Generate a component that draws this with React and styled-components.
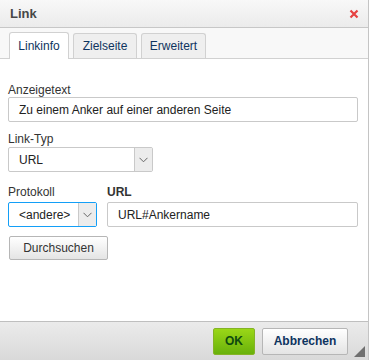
import React from 'react';
import styled, { createGlobalStyle } from 'styled-components';

const Global = createGlobalStyle`
  html, body { margin: 0; padding: 0; background: #fff; }
  body { font-family: "Liberation Sans", Arial, sans-serif; font-size: 12px; color: #333; }
`;

const Dialog = styled.div`
  width: 369px;
  height: 360px;
  display: flex;
  flex-direction: column;
  box-sizing: border-box;
  border-right: 1px solid #c4c4c4;
  background: #fff;
`;

const TitleBar = styled.div`
  height: 28px;
  box-sizing: border-box;
  display: flex;
  align-items: center;
  justify-content: space-between;
  padding: 0 9px 0 10px;
  background: linear-gradient(#f8f8f8, #ebebeb);
  border-bottom: 1px solid #c7c7c7;
  font-size: 13px;
  font-weight: bold;
  color: #474747;
`;

const Close = styled.span`
  display: flex;
`;

const TabBar = styled.div`
  height: 31px;
  box-sizing: border-box;
  display: flex;
  align-items: flex-end;
  gap: 4px;
  padding: 0 0 0 9px;
  background: #f8f8f8;
  border-bottom: 1px solid #d1d1d1;
`;

const Tab = styled.div`
  width: ${p => p.$w}px;
  box-sizing: border-box;
  display: flex;
  align-items: center;
  justify-content: center;
  border: 1px solid #d1d1d1;
  border-bottom: none;
  border-radius: 3px 3px 0 0;
  background: ${p => (p.$active ? '#fff' : '#efefef')};
  color: #0e3460;
  font-size: 12px;
  margin-bottom: ${p => (p.$active ? '-1px' : '0')};
  height: ${p => (p.$active ? '27px' : '25px')};
`;

const Body = styled.div`
  flex: 1;
  padding: 24px 10px 0 8px;
  display: flex;
  flex-direction: column;
`;

const Label = styled.div`
  font-size: 12px;
  color: #333;
  font-weight: ${p => (p.$bold ? 'bold' : 'normal')};
  margin-bottom: ${p => p.$gap}px;
  line-height: 14px;
`;

const Field = styled.div`
  margin-bottom: ${p => p.$mb}px;
`;

const Input = styled.div`
  height: 25px;
  box-sizing: border-box;
  border: 1px solid #c9c9c9;
  border-radius: 2px;
  padding: 0 10px;
  display: flex;
  align-items: center;
  font-size: 12px;
  color: #222;
  background: #fff;
`;

const Select = styled.div`
  width: ${p => p.$w}px;
  height: 25px;
  box-sizing: border-box;
  border: 1px solid ${p => (p.$focus ? '#139ff7' : '#c9c9c9')};
  border-radius: 2px;
  display: flex;
  background: #fff;
  font-size: 12px;
  color: #222;
`;

const SelectText = styled.div`
  flex: 1;
  display: flex;
  align-items: center;
  padding-left: 10px;
`;

const Arrow = styled.div`
  width: 17px;
  border-left: 1px solid #c9c9c9;
  background: #ececec;
  display: flex;
  align-items: center;
  justify-content: center;
`;

const Row = styled.div`
  display: flex;
  gap: 10px;
`;

const Grow = styled.div`
  flex: 1;
`;

const Button = styled.div`
  width: 99px;
  height: 24px;
  box-sizing: border-box;
  border: 1px solid #b6b6b6;
  border-radius: 2px;
  background: linear-gradient(#fff, #e4e4e4);
  display: flex;
  align-items: center;
  justify-content: center;
  color: #333;
  font-size: 12px;
  margin-left: 1px;
`;

const Footer = styled.div`
  height: 39px;
  box-sizing: border-box;
  border-top: 1px solid #bfbfbf;
  background: linear-gradient(#ebebeb, #d9d9d9);
  display: flex;
  align-items: center;
  justify-content: flex-end;
  gap: 7px;
  padding: 0 20px 0 0;
  position: relative;
`;

const FootButton = styled.div`
  width: ${p => (p.$ok ? 42 : 86)}px;
  height: 27px;
  box-sizing: border-box;
  border-radius: 2px;
  display: flex;
  align-items: center;
  justify-content: center;
  font-weight: bold;
  font-size: 12px;
  border: 1px solid ${p => (p.$ok ? '#84b325' : '#b6b6b6')};
  background: ${p => (p.$ok ? 'linear-gradient(#9ad717, #69b10b)' : 'linear-gradient(#fff, #e4e4e4)')};
  color: ${p => (p.$ok ? '#0f4a0f' : '#0e3460')};
`;

const Grip = styled.div`
  position: absolute;
  right: 3px;
  bottom: 3px;
  width: 0;
  height: 0;
  border-left: 11px solid transparent;
  border-bottom: 11px solid #6f6f6f;
`;

const Chevron = () => (
  <svg width="9" height="6" viewBox="0 0 9 6">
    <path d="M0.5 0.8 L4.5 4.8 L8.5 0.8" fill="none" stroke="#666" strokeWidth="1" />
  </svg>
);

const CloseIcon = () => (
  <svg width="10" height="10" viewBox="0 0 10 10">
    <path d="M1.5 1.5 L8.5 8.5 M8.5 1.5 L1.5 8.5" stroke="#e64141" strokeWidth="2.2" />
  </svg>
);

export default function App() {
  return (
    <>
      <Global />
      <Dialog>
        <TitleBar>
          <span>Link</span>
          <Close><CloseIcon /></Close>
        </TitleBar>
        <TabBar>
          <Tab $active $w={60}>Linkinfo</Tab>
          <Tab $w={64}>Zielseite</Tab>
          <Tab $w={65}>Erweitert</Tab>
        </TabBar>
        <Body>
          <Field $mb={10}>
            <Label $gap={0}>Anzeigetext</Label>
            <Input>Zu einem Anker auf einer anderen Seite</Input>
          </Field>
          <Field $mb={13}>
            <Label $gap={1}>Link-Typ</Label>
            <Select $w={145}>
              <SelectText>URL</SelectText>
              <Arrow><Chevron /></Arrow>
            </Select>
          </Field>
          <Field $mb={9}>
            <Row>
              <div>
                <Label $gap={3}>Protokoll</Label>
                <Select $w={89} $focus>
                  <SelectText>&lt;andere&gt;</SelectText>
                  <Arrow><Chevron /></Arrow>
                </Select>
              </div>
              <Grow>
                <Label $bold $gap={3}>URL</Label>
                <Input>URL#Ankername</Input>
              </Grow>
            </Row>
          </Field>
          <Button>Durchsuchen</Button>
        </Body>
        <Footer>
          <FootButton $ok>OK</FootButton>
          <FootButton>Abbrechen</FootButton>
          <Grip />
        </Footer>
      </Dialog>
    </>
  );
}
